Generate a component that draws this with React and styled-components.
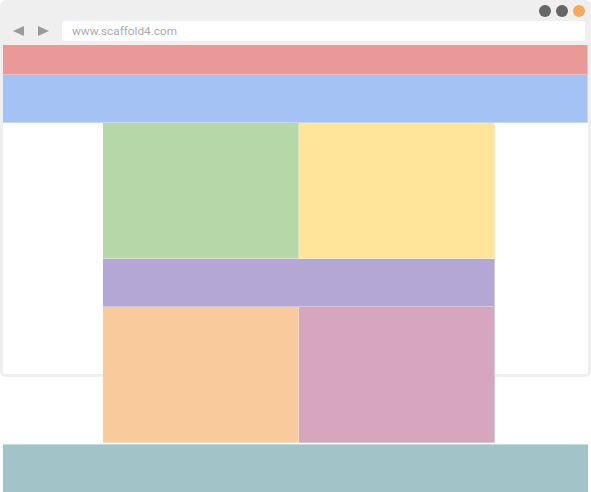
import React from 'react';
import styled, { createGlobalStyle } from 'styled-components';

const GlobalStyle = createGlobalStyle`
  html, body {
    margin: 0;
    padding: 0;
    background: #ffffff;
    font-family: Roboto, "Liberation Sans", sans-serif;
  }
`;

// whole picture; tall enough to show the page spilling out of the window
const Stage = styled.div`
  width: 591px;
  height: 492px;
  background: #ffffff;
`;

// Browser window frame
const Frame = styled.div`
  width: 591px;
  box-sizing: border-box;
  background-color: #efefef;
  border-radius: 6px;
  padding: 0 3px 3px 3px;
`;

const Chrome = styled.div`
  height: 45px;
  position: relative;
  display: flex;
  align-items: flex-end;
  padding: 0 3px 4px 10px;
  box-sizing: border-box;
  gap: 8px;
`;

const Dots = styled.div`
  position: absolute;
  top: 5px;
  right: 3px;
  display: flex;
  gap: 5px;
`;

const Dot = styled.span`
  width: 12px;
  height: 12px;
  border-radius: 50%;
  background-color: ${(p) => p.color};
`;

const NavArrows = styled.div`
  display: flex;
  gap: 14px;
  align-items: center;
  height: 20px;
  margin-right: 5px;
`;

const UrlBar = styled.div`
  flex: 1;
  height: 20px;
  background: #ffffff;
  border-radius: 3px;
  display: flex;
  align-items: center;
  padding-left: 10px;
  font-size: 11.8px;
  color: #ababab;
`;

// page area inside the window; the page is taller than the window and spills out below
const Viewport = styled.div`
  height: 329px;
  background: #ffffff;
  border-radius: 0 0 3px 3px;
`;

const Block = styled.div`
  background-color: ${(p) => p.color};
  height: ${(p) => p.h}px;
  box-sizing: border-box;
  box-shadow: inset -1px -1px 0 rgba(255, 255, 255, 0.35);
`;

const Grid = styled.div`
  width: 392px;
  margin-left: 100px;
  display: grid;
  grid-template-columns: 1fr 1fr;
`;

const Wide = styled(Block)`
  grid-column: 1 / span 2;
`;

const Footer = styled(Block)`
  margin-top: 1px;
  box-shadow: inset 0 1px 0 rgba(255, 255, 255, 0.4);
`;

const Arrow = ({ dir }) => (
  <svg width="11" height="10" viewBox="0 0 11 10">
    {dir === 'left' ? (
      <polygon points="0,5 11,0 11,10" fill="#9a9a9a" />
    ) : (
      <polygon points="11,5 0,0 0,10" fill="#9a9a9a" />
    )}
  </svg>
);

const App = () => {
  return (
    <Stage>
      <GlobalStyle />
      <Frame>
        <Chrome>
          <Dots>
            <Dot color="#666666" />
            <Dot color="#666666" />
            <Dot color="#f6a95b" />
          </Dots>
          <NavArrows>
            <Arrow dir="left" />
            <Arrow dir="right" />
          </NavArrows>
          <UrlBar>www.scaffold4.com</UrlBar>
        </Chrome>
        <Viewport>
          <Block color="#ea9999" h={30} />
          <Block color="#a4c2f4" h={48} />
          <Grid>
            <Block color="#b6d7a8" h={136} />
            <Block color="#ffe599" h={136} />
            <Wide color="#b4a7d6" h={48} />
            <Block color="#f9cb9c" h={136} />
            <Block color="#d5a6bd" h={136} />
          </Grid>
          <Footer color="#a2c4c9" h={48} />
        </Viewport>
      </Frame>
    </Stage>
  );
};

export default App;
